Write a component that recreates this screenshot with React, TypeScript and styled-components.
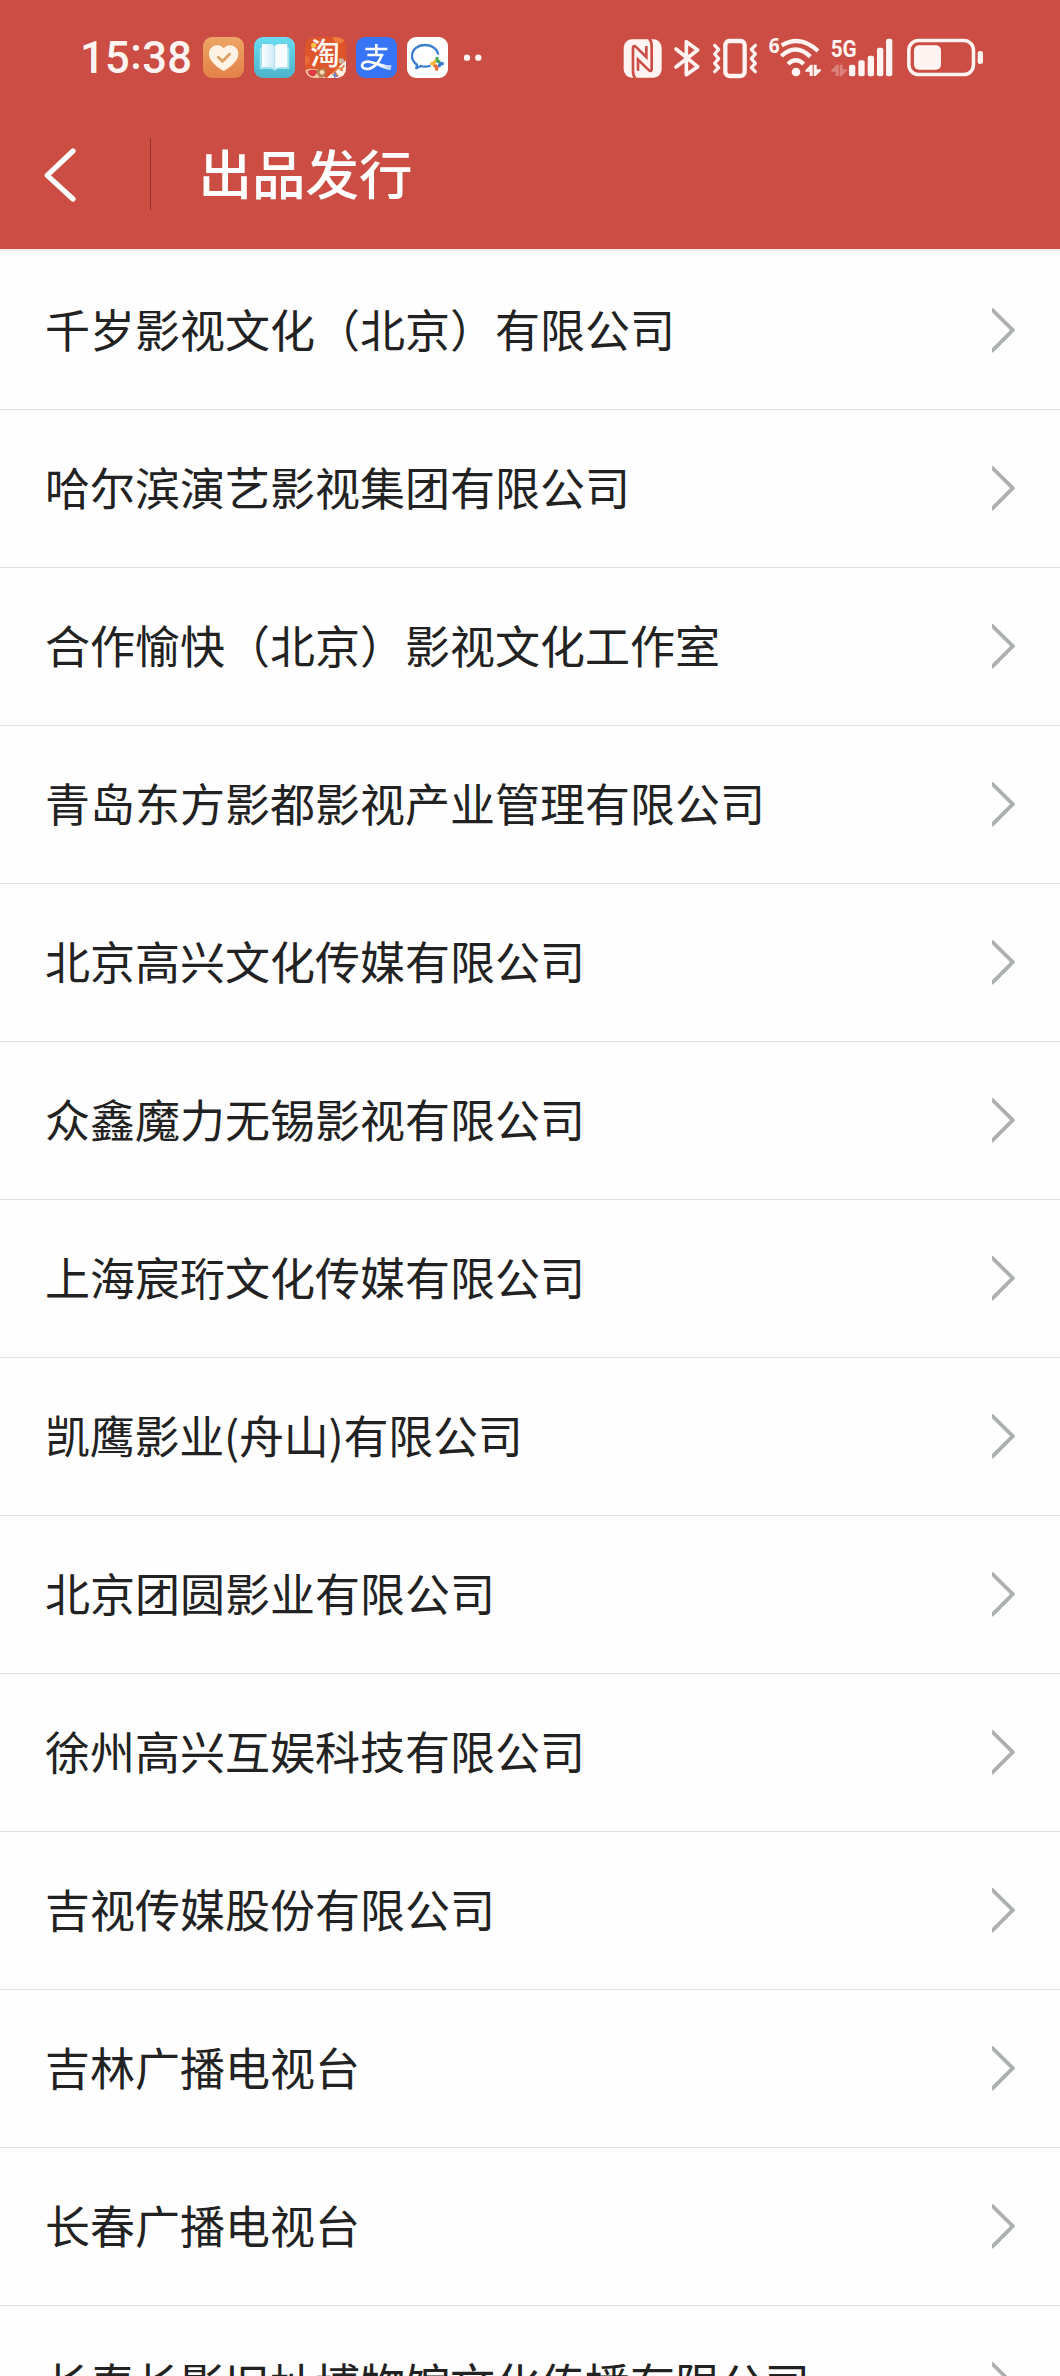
import React from 'react';
import styled, { createGlobalStyle } from 'styled-components';

const GlobalStyle = createGlobalStyle`
  * { box-sizing: border-box; }
  html, body { margin: 0; padding: 0; background: #fefefe; }
  body { height: 2376px; overflow: hidden; }
`;

const ink = '#fff4f2';
const red = '#cb4d43';
const sans = "'Noto Sans CJK SC', 'Noto Sans', sans-serif";

const Screen = styled.div`
  width: 1060px;
  height: 2376px;
  overflow: hidden;
  background: #fefefe;
  font-family: ${sans};
`;

const Header = styled.header`
  height: 251px;
  background: ${red};
  border-bottom: 2px solid #fbeae9;
`;

const StatusBar = styled.div`
  display: flex;
  align-items: center;
  justify-content: space-between;
  height: 116px;
  padding: 0 76px 0 80px;
`;

const Group = styled.div`
  display: flex;
  align-items: center;
`;

const Clock = styled.div`
  display: flex;
  width: 123px;
  height: 52px;
  font: 500 43.5px/53px Roboto, sans-serif;
  letter-spacing: 0.4px;
  color: ${ink};
  white-space: nowrap;
`;

const Colon = styled.span`
  line-height: 46px;
`;

const Glyph = styled.svg<{ $w: number; $gap?: number }>`
  display: block;
  flex: none;
  width: ${(p) => p.$w}px;
  height: 44px;
  margin-left: ${(p) => p.$gap ?? 0}px;
  overflow: visible;
`;

const TitleBar = styled.div`
  display: flex;
  align-items: center;
  height: 133px;
  padding: 0 0 15px 44px;
`;

const BackIcon = styled.svg`
  display: block;
  width: 34px;
  height: 54px;
`;

const Separator = styled.div`
  width: 1px;
  height: 72px;
  margin: 0 0 2px 72px;
  background: #8f302c;
`;

const Title = styled.h1`
  margin: 0 0 6px 47.5px;
  font-size: 53.5px;
  font-weight: 500;
  line-height: 76px;
  color: #fff;
`;

const List = styled.ul`
  margin: 0;
  padding: 0;
  list-style: none;
`;

const Row = styled.li`
  display: flex;
  align-items: center;
  justify-content: space-between;
  height: 158px;
  padding: 0 42px 0 45px;
  box-shadow: 0 1px 0 #e2e2e2;
`;

const Name = styled.span<{ $tight: boolean }>`
  margin-bottom: 2px;
  font-size: 45px;
  line-height: 64px;
  letter-spacing: ${(p) => (p.$tight ? '-0.25px' : 'normal')};
  color: #222;
  white-space: nowrap;
`;

const Chevron = styled.svg`
  display: block;
  width: 26px;
  height: 46px;
`;

const names = [
  '千岁影视文化（北京）有限公司',
  '哈尔滨演艺影视集团有限公司',
  '合作愉快（北京）影视文化工作室',
  '青岛东方影都影视产业管理有限公司',
  '北京高兴文化传媒有限公司',
  '众鑫魔力无锡影视有限公司',
  '上海宸珩文化传媒有限公司',
  '凯鹰影业(舟山)有限公司',
  '北京团圆影业有限公司',
  '徐州高兴互娱科技有限公司',
  '吉视传媒股份有限公司',
  '吉林广播电视台',
  '长春广播电视台',
  '长春长影旧址博物馆文化传播有限公司',
];

function HealthApp() {
  return (
    <Glyph $w={41} viewBox="399 48 123 132">
      <defs>
        <linearGradient id="health" x1="0" y1="0" x2="0" y2="1">
          <stop offset="0" stopColor="#eda665" />
          <stop offset="1" stopColor="#e38149" />
        </linearGradient>
      </defs>
      <rect x="399" y="51" width="123" height="123" rx="27" fill="url(#health)" />
      <path d="M461 153C446 144 417 125 417 101C417 75 449 68 461 85C473 68 505 75 505 101C505 125 476 144 461 153Z" fill="#fff3e6" />
      <path d="M445 112L458 124L479 102" fill="none" stroke="#dda467" strokeWidth="9" strokeLinecap="round" strokeLinejoin="round" />
    </Glyph>
  );
}

function BookApp() {
  return (
    <Glyph $w={41} $gap={10} viewBox="0 48 123 132">
      <defs>
        <linearGradient id="book" x1="0" y1="0" x2="0" y2="1">
          <stop offset="0" stopColor="#6bdcf1" />
          <stop offset="1" stopColor="#4cb3cb" />
        </linearGradient>
        <linearGradient id="page" x1="0" y1="0" x2="1" y2="0">
          <stop offset="0" stopColor="#ffffff" />
          <stop offset="1" stopColor="#c9e9f6" />
        </linearGradient>
      </defs>
      <rect y="51" width="123" height="123" rx="27" fill="url(#book)" />
      <path d="M17 83H106V147H70L62 152L54 147H17Z" fill="#a4e3ee" />
      <path d="M24 72H48Q62 72 62 83V151Q59 141 45 141H24Z" fill="url(#page)" />
      <path d="M100 72H76Q62 72 62 83V151Q65 141 79 141H100Z" fill="#f8fdff" />
      <path d="M62 83V149" stroke="#a7d7e7" strokeWidth="2" />
    </Glyph>
  );
}

function TaobaoApp() {
  return (
    <Glyph $w={41} $gap={10} viewBox="75 48 123 132">
      <defs>
        <clipPath id="tbClip"><rect x="75" y="51" width="123" height="123" rx="27" /></clipPath>
      </defs>
      <g clipPath="url(#tbClip)">
        <rect x="75" y="51" width="123" height="123" fill="#de552c" />
        <circle cx="177" cy="51" r="19" fill="#ef7b3b" />
        <circle cx="76" cy="121" r="14" fill="#ea6a38" />
        <path d="M200 119L140 174H200Z" fill="#fff3e7" />
        <path d="M76 150Q98 142 120 152L138 174H76Z" fill="#f2c3a4" />
        <path d="M83 153Q98 146 112 153Q108 170 96 169Q85 166 83 153Z" fill="#dd3c43" />
        <path d="M111 145L120 149L130 142L139 151L134 170L119 173L111 160Z" fill="#b97d52" />
        <circle cx="126" cy="157" r="7" fill="#f6d9b6" />
        <path d="M155 162L177 142M162 154L174 168M178 143L188 153M180 151L193 136" stroke="#e47c39" strokeWidth="5" />
        <path d="M158 164L173 170M166 157L164 174" stroke="#6272c9" strokeWidth="4" />
      </g>
      <text x="91" y="132" fontFamily={sans} fontSize="89" fontWeight="500" fill="#fffaf4">淘</text>
      <circle cx="101" cy="76" r="8" fill="#ffc34b" />
      <circle cx="184" cy="123" r="8" fill="#c9b6a6" />
    </Glyph>
  );
}

function AlipayApp() {
  return (
    <Glyph $w={41} $gap={10} viewBox="228 48 123 132">
      <defs>
        <linearGradient id="aliTail" x1="270" y1="0" x2="336" y2="0" gradientUnits="userSpaceOnUse">
          <stop offset="0.45" stopColor="#fff" />
          <stop offset="1" stopColor="#a9c5fb" />
        </linearGradient>
      </defs>
      <rect x="228" y="51" width="123" height="123" rx="27" fill="#3875f6" />
      <path d="M256 87H322M289 72V104M262 105H310" fill="none" stroke="#fff" strokeWidth="8" />
      <path d="M306 103Q298 127 282 139Q266 151 252 145Q242 139 249 130Q260 120 282 129Q305 138 332 142" fill="none" stroke="url(#aliTail)" strokeWidth="8" />
      <path d="M293 128Q315 136 335 136L332 151Q308 147 291 134Z" fill="url(#aliTail)" />
    </Glyph>
  );
}

function WeComApp() {
  return (
    <Glyph $w={41} $gap={10} viewBox="381 48 123 132">
      <rect x="381" y="51" width="123" height="123" rx="27" fill="#fff" />
      <path d="M474 101C470 84 453 75 435 75C413 75 396 89 396 108C396 119 402 128 411 134L409 145L422 138Q435 142 449 138" fill="none" stroke="#3c7fd0" strokeWidth="7" strokeLinecap="round" strokeLinejoin="round" />
      <g strokeLinecap="round" strokeWidth="10" fill="none">
        <path d="M471 115V119Q471 124 477 125" stroke="#45a85b" />
        <path d="M487 131H484Q480 132 478 137" stroke="#347bd0" />
        <path d="M470 148V143Q470 138 464 137" stroke="#e96f38" />
        <path d="M455 131H458Q462 130 464 125" stroke="#f3bb37" />
      </g>
    </Glyph>
  );
}

function MoreDots() {
  return (
    <Glyph $w={20} $gap={15} viewBox="549 48 60 132">
      <circle cx="561" cy="113" r="9.5" fill={ink} />
      <circle cx="595" cy="113" r="9.5" fill={ink} />
    </Glyph>
  );
}

function Nfc() {
  return (
    <Glyph $w={39} viewBox="39 48 117 132">
      <rect x="41" y="58" width="114" height="115" rx="25" fill={ink} />
      <path d="M77 175Q69 168 69 154V82Q71 75 77 80L109 111V78" fill="none" stroke={red} strokeWidth="8" />
      <path d="M117 56Q125 63 125 77V149Q123 156 117 151L84 119V152" fill="none" stroke={red} strokeWidth="8" />
    </Glyph>
  );
}

function Bluetooth() {
  return (
    <Glyph $w={26} $gap={12} viewBox="192 48 78 132">
      <path d="M198 87L263 140L229 164V65L263 90L198 141" fill="none" stroke={ink} strokeWidth="11" strokeLinecap="round" strokeLinejoin="round" />
    </Glyph>
  );
}

function Vibrate() {
  return (
    <Glyph $w={46} $gap={12} viewBox="306 48 138 132">
      <g fill="none" stroke={ink} strokeWidth="10" strokeLinecap="round" strokeLinejoin="round">
        <rect x="346" y="63" width="58" height="105" rx="12" strokeWidth="13" />
        <path d="M314 76L326 88L314 102L326 116L314 130L326 143L314 155" />
        <path d="M436 76L424 88L436 102L424 116L436 130L424 143L436 155" />
      </g>
    </Glyph>
  );
}

function DataArrows({ x, opacity = 1 }: { x: number; opacity?: number }) {
  return (
    <g transform={`translate(${x} 0)`} fill={ink} opacity={opacity}>
      <path d="M22 134V168H13V155H0V151L16 134Z" />
      <path d="M25 168V134H34V148H47V152L31 168Z" />
    </g>
  );
}

function Wifi() {
  return (
    <Glyph $w={53} $gap={11} viewBox="477 48 159 132">
      <text x="476" y="100" fontFamily="'Noto Sans', sans-serif" fontSize="66" fontWeight="700" textLength="33" lengthAdjust="spacingAndGlyphs" fill={ink}>6</text>
      <g fill="none" stroke={ink} strokeWidth="13">
        <path d="M515 76Q571 43 624 93" />
        <path d="M514 108Q558 68 601 110" />
        <path d="M534 132Q558 110 581 132" />
      </g>
      <circle cx="558" cy="156" r="13" fill={ink} />
      <DataArrows x={586} />
    </Glyph>
  );
}

const bars = [
  { x: 717, y: 134 },
  { x: 745, y: 121 },
  { x: 773, y: 107 },
  { x: 801, y: 83 },
  { x: 828, y: 56 },
];

function Signal() {
  return (
    <Glyph $w={63} $gap={8} viewBox="660 48 189 132">
      <text x="662" y="110" fontFamily="Roboto, sans-serif" fontSize="73" fontWeight="700" textLength="78" lengthAdjust="spacingAndGlyphs" fill={ink}>5G</text>
      <DataArrows x={664} opacity={0.32} />
      {bars.map((b) => (
        <rect key={b.x} x={b.x} y={b.y} width="19" height={169 - b.y} rx="6" fill={ink} />
      ))}
    </Glyph>
  );
}

function Battery() {
  return (
    <Glyph $w={77} $gap={14} viewBox="891 48 231 132">
      <rect x="896.5" y="61.5" width="194" height="102" rx="29" fill="none" stroke={ink} strokeWidth="10.5" />
      <rect x="912" y="76" width="81" height="73" rx="15" fill={ink} />
      <rect x="1103" y="93" width="16" height="39" rx="7" fill={ink} />
    </Glyph>
  );
}

export default function App() {
  return (
    <Screen>
      <GlobalStyle />
      <Header>
        <StatusBar>
          <Group>
            <Clock>15<Colon>:</Colon>38</Clock>
            <HealthApp />
            <BookApp />
            <TaobaoApp />
            <AlipayApp />
            <WeComApp />
            <MoreDots />
          </Group>
          <Group>
            <Nfc />
            <Bluetooth />
            <Vibrate />
            <Wifi />
            <Signal />
            <Battery />
          </Group>
        </StatusBar>
        <TitleBar>
          <BackIcon viewBox="0 0 34 54">
            <path d="M29 3L3.2 27.3L29 51" fill="none" stroke="#fff" strokeWidth="5.2" strokeLinecap="round" strokeLinejoin="round" />
          </BackIcon>
          <Separator />
          <Title>出品发行</Title>
        </TitleBar>
      </Header>
      <List>
        {names.map((name) => (
          <Row key={name}>
            <Name $tight={name.includes('(')}>{name}</Name>
            <Chevron viewBox="0 0 26 46">
              <path d="M-0.5 2L20.8 23.2L-0.5 44.5" fill="none" stroke="#adb0b0" strokeWidth="3.8" strokeLinejoin="round" />
            </Chevron>
          </Row>
        ))}
      </List>
    </Screen>
  );
}
